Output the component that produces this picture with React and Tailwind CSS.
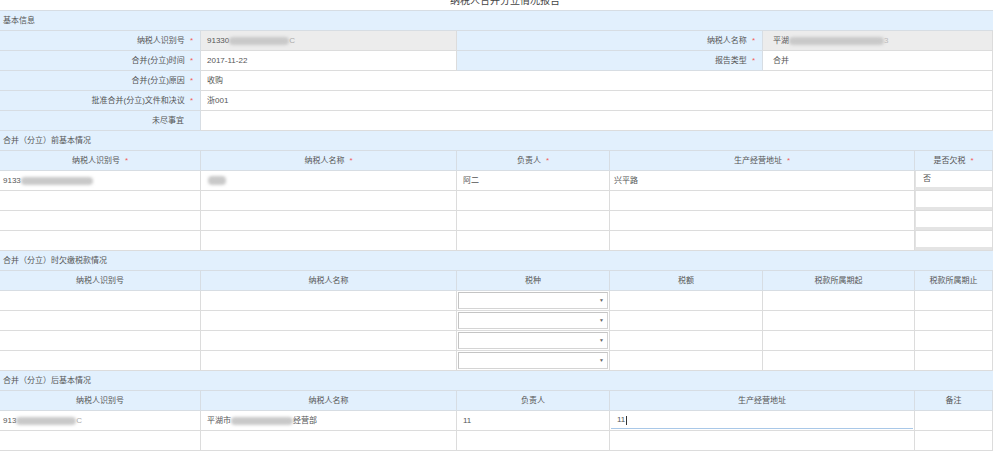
import React from 'react';

const FONT = { fontFamily: '"Liberation Sans", "Noto Sans CJK SC", sans-serif' };

const Star = () => <span className="text-[#f25b5b] ml-[5px]">*</span>;

const Blur = ({ w, h = 8, className = '' }) => (
  <span
    className={`inline-block bg-[#c9c9c9] blur-[1.5px] rounded-sm align-middle ${className}`}
    style={{ width: w, height: h }}
  />
);

const Label = ({ children, required, className = '' }) => (
  <div className={`h-5 flex items-center justify-end pr-[7px] bg-[#e2f0fd] border-b border-r border-[#d7dde3] ${className}`}>
    <span>{children}</span>
    {required ? <Star /> : <span className="w-[9px]" />}
  </div>
);

const Value = ({ children, gray, className = '' }) => (
  <div className={`h-5 flex items-center pl-[6px] border-b border-r border-[#dcdcdc] ${gray ? 'bg-[#ececec]' : 'bg-white'} ${className}`}>
    {children}
  </div>
);

const SectionTitle = ({ children }) => (
  <div className="h-5 flex items-center pl-[3px] bg-[#e2f0fd] border-b border-[#d7dde3]">{children}</div>
);

const Head = ({ children, required }) => (
  <div className="h-5 flex items-center justify-center bg-[#e2f0fd] border-b border-r border-[#d7dde3]">
    <span>{children}</span>
    {required && <Star />}
  </div>
);

const Cell = ({ children, className = '' }) => (
  <div className={`h-5 flex items-center pl-[3px] bg-white border-b border-r border-[#dcdcdc] ${className}`}>{children}</div>
);

const SelectCell = () => (
  <div className="h-5 flex items-center bg-white border-b border-r border-[#dcdcdc] p-[1px]">
    <div className="w-full h-[17px] border border-[#d4d4d4] border-t-[#c4c4c4] border-l-[#c4c4c4] flex items-center justify-end pr-[3px] text-[5px] text-[#666]">▼</div>
  </div>
);

const YesNoCell = ({ children }) => (
  <div className="h-5 bg-white border-b border-r border-[#dcdcdc] flex flex-col">
    <div className="flex-1 flex items-center pl-[7px] border-l border-[#e3e3e3]">{children}</div>
    <div className="h-[3px] bg-[#e4e4e4]" />
  </div>
);

const COLS5 = 'grid grid-cols-[201px_256px_153px_305px_78px]';
const COLS6 = 'grid grid-cols-[201px_256px_153px_153px_152px_78px]';

export default function App() {
  return (
    <div className="w-[1000px] h-[458px] bg-white overflow-hidden text-[8px] text-[#555]" style={FONT}>
      <div className="h-[10px] overflow-hidden flex justify-center">
        <div className="text-[10px] leading-[10px] -mt-[4px] pl-[10px] text-[#444]">纳税人合并分立情况报告</div>
      </div>
      <div className="w-[993px] border-t border-[#d7dde3]">
        {/* 基本信息 */}
        <SectionTitle>基本信息</SectionTitle>
        <div className="grid grid-cols-[201px_256px_306px_230px]">
          <Label required>纳税人识别号</Label>
          <Value gray>
            <span>91330</span>
            <Blur w={60} />
            <span className="text-[#aaa]">C</span>
          </Value>
          <Label required>纳税人名称</Label>
          <Value gray className="pl-[10px]">
            <span>平湖</span>
            <Blur w={95} />
            <span className="text-[#bbb]">3</span>
          </Value>

          <Label required>合并(分立)时间</Label>
          <Value>2017-11-22</Value>
          <Label required>报告类型</Label>
          <Value className="pl-[10px]">合并</Value>

          <Label required>合并(分立)原因</Label>
          <Value className="col-span-3">收购</Value>

          <Label required>批准合并(分立)文件和决议</Label>
          <Value className="col-span-3">浙001</Value>

          <Label>未尽事宜</Label>
          <Value className="col-span-3" />
        </div>

        {/* 合并前 */}
        <SectionTitle>合并（分立）前基本情况</SectionTitle>
        <div className={COLS5}>
          <Head required>纳税人识别号</Head>
          <Head required>纳税人名称</Head>
          <Head required>负责人</Head>
          <Head required>生产经营地址</Head>
          <Head required>是否欠税</Head>

          <Cell>
            <span>9133</span>
            <Blur w={72} />
          </Cell>
          <Cell className="pl-[7px]">
            <Blur w={18} h={9} className="rounded-full" />
          </Cell>
          <Cell className="pl-[6px]">阿二</Cell>
          <Cell className="pl-[4px]">兴平路</Cell>
          <YesNoCell>否</YesNoCell>

          {[0, 1, 2].map((i) => (
            <React.Fragment key={i}>
              <Cell />
              <Cell />
              <Cell />
              <Cell />
              <YesNoCell />
            </React.Fragment>
          ))}
        </div>

        {/* 欠缴税款 */}
        <SectionTitle>合并（分立）时欠缴税款情况</SectionTitle>
        <div className={COLS6}>
          <Head>纳税人识别号</Head>
          <Head>纳税人名称</Head>
          <Head>税种</Head>
          <Head>税额</Head>
          <Head>税款所属期起</Head>
          <Head>税款所属期止</Head>
          {[0, 1, 2, 3].map((i) => (
            <React.Fragment key={i}>
              <Cell />
              <Cell />
              <SelectCell />
              <Cell />
              <Cell />
              <Cell />
            </React.Fragment>
          ))}
        </div>

        {/* 合并后 */}
        <SectionTitle>合并（分立）后基本情况</SectionTitle>
        <div className={COLS5}>
          <Head>纳税人识别号</Head>
          <Head>纳税人名称</Head>
          <Head>负责人</Head>
          <Head>生产经营地址</Head>
          <Head>备注</Head>

          <Cell>
            <span>913</span>
            <Blur w={60} />
            <span className="text-[#aaa]">C</span>
          </Cell>
          <Cell className="pl-[6px]">
            <span>平湖市</span>
            <Blur w={62} />
            <span>经营部</span>
          </Cell>
          <Cell className="pl-[6px]">11</Cell>
          <div className="h-5 bg-white border-b border-r border-[#dcdcdc] p-[1px]">
            <div className="h-full flex items-center pl-[6px] border-b border-[#a9c8e8]">
              <span>11</span>
              <span className="w-px h-[9px] bg-[#333] ml-px" />
            </div>
          </div>
          <Cell />

          <Cell />
          <Cell />
          <Cell />
          <Cell />
          <Cell />
        </div>
      </div>
    </div>
  );
}
